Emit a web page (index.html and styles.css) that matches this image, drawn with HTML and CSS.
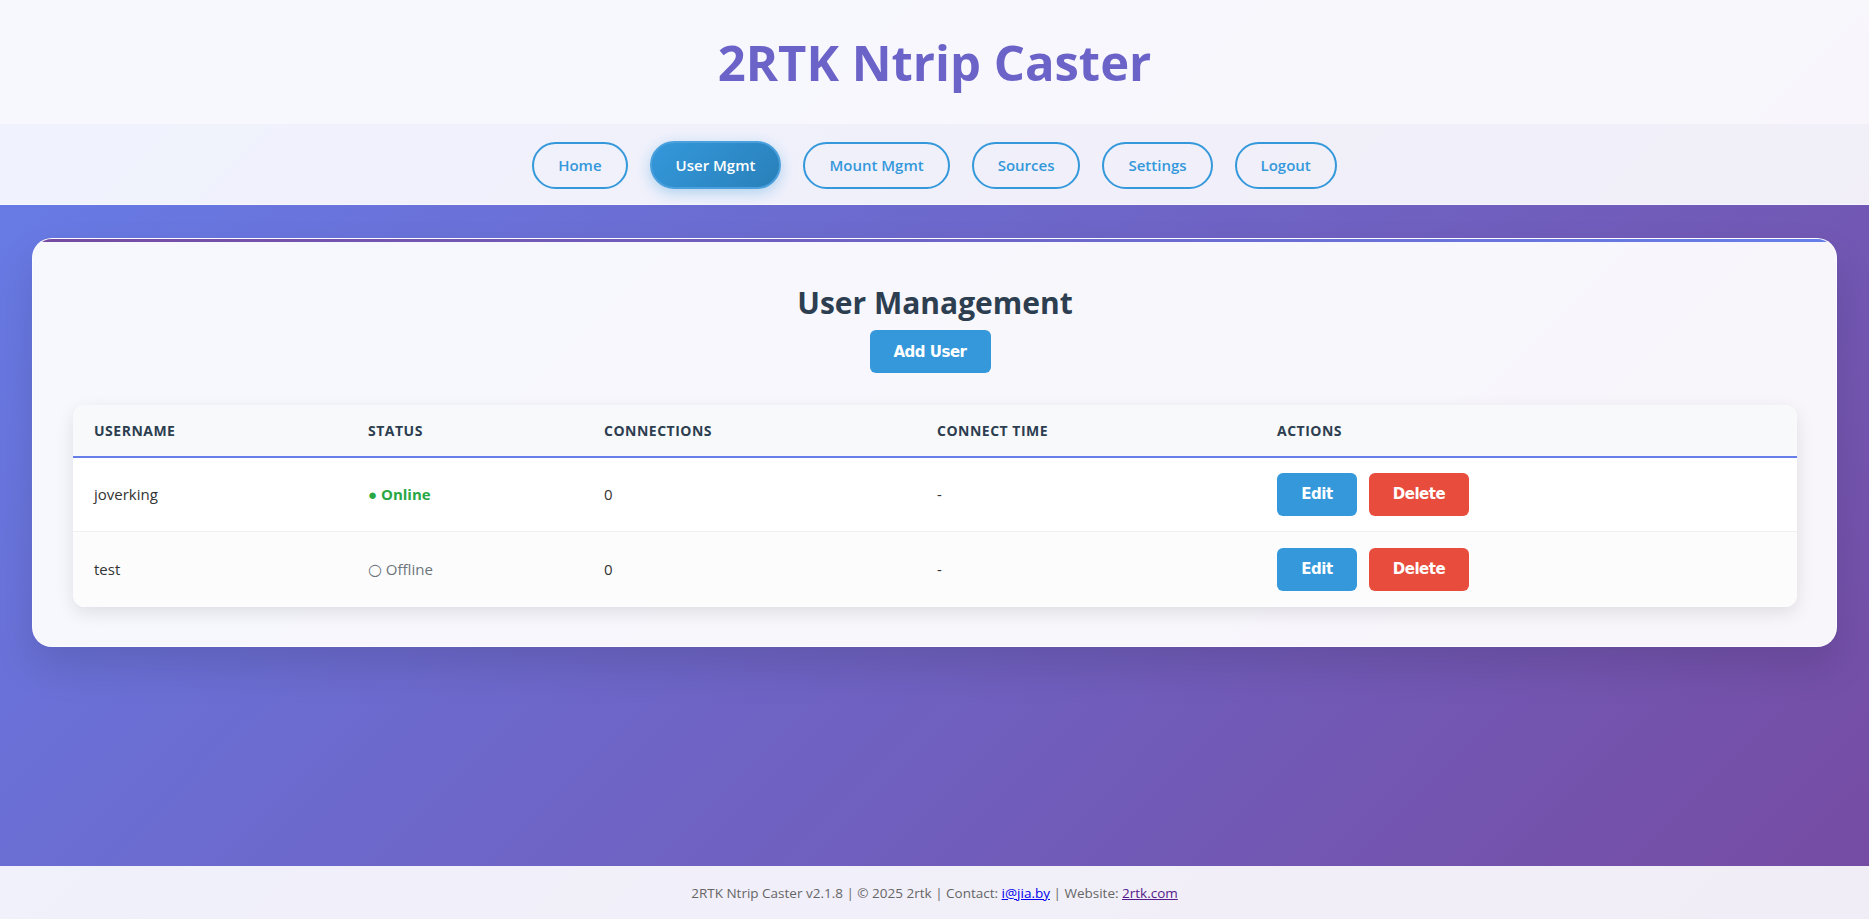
FILE: index.html
```html
<!DOCTYPE html>
<html lang="en">
<head>
<meta charset="utf-8">
<title>2RTK Ntrip Caster - User Management</title>
<link rel="stylesheet" href="styles.css">
</head>
<body>
<div class="page">
  <header class="site-header">
    <h1 class="site-title">2RTK Ntrip Caster</h1>
  </header>
  <nav class="site-nav">
    <a class="nav-btn" href="#">Home</a>
    <a class="nav-btn active" href="#">User Mgmt</a>
    <a class="nav-btn" href="#">Mount Mgmt</a>
    <a class="nav-btn" href="#">Sources</a>
    <a class="nav-btn" href="#">Settings</a>
    <a class="nav-btn" href="#">Logout</a>
  </nav>
  <main class="main">
    <section class="card">
      <h2 class="card-title">User Management</h2>
      <div class="card-actions">
        <button class="btn btn-primary btn-add">Add User</button>
      </div>
      <div class="table-wrap">
        <table class="data-table">
          <colgroup>
            <col class="c1"><col class="c2"><col class="c3"><col class="c4"><col class="c5">
          </colgroup>
          <thead>
            <tr>
              <th>Username</th>
              <th>Status</th>
              <th>Connections</th>
              <th>Connect Time</th>
              <th>Actions</th>
            </tr>
          </thead>
          <tbody>
            <tr>
              <td>joverking</td>
              <td><span class="status-online">● Online</span></td>
              <td>0</td>
              <td>-</td>
              <td><div class="row-actions"><button class="btn btn-primary">Edit</button><button class="btn btn-danger">Delete</button></div></td>
            </tr>
            <tr>
              <td>test</td>
              <td><span class="status-offline"><span class="ring">○</span> Offline</span></td>
              <td>0</td>
              <td>-</td>
              <td><div class="row-actions"><button class="btn btn-primary">Edit</button><button class="btn btn-danger">Delete</button></div></td>
            </tr>
          </tbody>
        </table>
      </div>
    </section>
  </main>
  <footer class="site-footer">
    <p class="footer-text">2RTK Ntrip Caster v2.1.8 | © 2025 2rtk | Contact: <a class="link-mail" href="#">i@jia.by</a> | Website: <a class="link-visited" href="#">2rtk.com</a></p>
  </footer>
</div>
</body>
</html>
```
FILE: styles.css
```css
* { box-sizing: border-box; }
html, body { margin: 0; padding: 0; }
body {
  font-family: "Open Sans", "Noto Sans", sans-serif;
  background: linear-gradient(135deg, #667eea 0%, #764ba2 100%);
  min-height: 100vh;
  color: #333;
}
.page {
  min-height: 100vh;
  display: flex;
  flex-direction: column;
}
.site-header {
  background: rgba(255, 255, 255, 0.95);
  height: 124px;
  display: flex;
  align-items: center;
  justify-content: center;
}
.site-title {
  margin: 0;
  font-size: 49px;
  font-weight: 700;
  color: #6c63c9;
  letter-spacing: 0;
}
.site-nav {
  background: rgba(255, 255, 255, 0.9);
  height: 81px;
  display: flex;
  justify-content: center;
  align-items: center;
  gap: 22px;
  padding-top: 2px;
  border-bottom: 1px solid rgba(255,255,255,0.4);
}
.nav-btn {
  display: inline-flex;
  align-items: center;
  justify-content: center;
  height: 47px;
  padding: 0 24px;
  border: 2px solid #3498db;
  border-radius: 24px;
  color: #3498db;
  text-decoration: none;
  font-size: 15px;
  font-weight: 600;
}
.nav-btn.active {
  background: linear-gradient(135deg, #3498db, #2980b9);
  color: #fff;
  border-color: #4aa0dd;
  height: 48px;
  margin-top: -1px;
  box-shadow: 0 4px 14px rgba(52, 152, 219, 0.35);
}
.main {
  flex: 1;
  padding: 33px 32px 32px;
}
.card {
  position: relative;
  background: rgba(255, 255, 255, 0.95);
  border: 1px solid rgba(255, 255, 255, 0.7);
  border-radius: 20px;
  overflow: hidden;
  padding: 42px 39px 39px 40px;
  box-shadow: 0 20px 40px rgba(0, 0, 0, 0.12);
}
.card::before {
  content: "";
  position: absolute;
  left: 0; right: 0; top: 0;
  height: 3px;
  background: linear-gradient(90deg, #764ba2, #667eea);
}
.card-title {
  margin: 0;
  text-align: center;
  font-size: 30px;
  font-weight: 700;
  color: #2c3e50;
  line-height: 44px;
}
.card-actions {
  display: flex;
  justify-content: center;
  margin-top: 5px;
  margin-bottom: 32px;
}
.btn {
  border: none;
  border-radius: 6px;
  color: #fff;
  font-family: "DejaVu Sans", Verdana, sans-serif;
  font-weight: 700;
  font-size: 15px;
  cursor: pointer;
  height: 43px;
  padding: 0 18px;
  letter-spacing: -0.5px;
}
.btn-primary { background: #3498db; }
.btn-danger { background: #e74c3c; }
.btn-add { width: 121px; padding: 0; margin-right: 10px; }
.table-wrap {
  background: #fff;
  border-radius: 12px;
  overflow: hidden;
  box-shadow: 0 6px 18px rgba(0, 0, 0, 0.1);
}
.data-table {
  width: 100%;
  border-collapse: collapse;
  table-layout: fixed;
}
.data-table thead tr {
  background: #f8f9fa;
}
.c1 { width: 274px; }
.c2 { width: 236px; }
.c3 { width: 333px; }
.c4 { width: 340px; }
.data-table th {
  text-align: left;
  padding: 0 21px;
  height: 52px;
  font-size: 14px;
  font-weight: 700;
  text-transform: uppercase;
  letter-spacing: 0.5px;
  color: #2c3e50;
  border-bottom: 2px solid #667eea;
}
.data-table td {
  padding: 0 21px;
  height: 74px;
  font-size: 15px;
  color: #333;
  border-bottom: 1px solid #f0f0f0;
}
.data-table tbody tr:nth-child(2) td { background: #fcfcfc; border-bottom: none; height: 76px; }
.status-online { color: #28a745; font-weight: 700; }
.status-offline { color: #6c757d; }
.ring { font-family: "DejaVu Sans", sans-serif; font-size: 16px; line-height: 1; }
.row-actions { display: flex; gap: 12px; }
.row-actions .btn-primary { width: 80px; padding: 0; }
.row-actions .btn-danger { width: 100px; padding: 0; }
.site-footer {
  background: rgba(255, 255, 255, 0.9);
  height: 53px;
  display: flex;
  align-items: center;
  justify-content: center;
}
.footer-text {
  margin: 0;
  font-size: 13.5px;
  color: #666;
  text-align: center;
}
.link-mail { color: #0000ee; }
.link-visited { color: #551a8b; }
```
